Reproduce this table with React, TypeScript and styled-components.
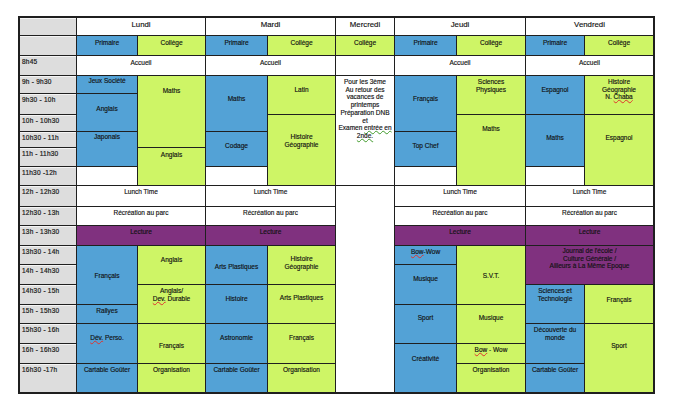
import React from 'react';
import styled, { createGlobalStyle } from 'styled-components';

const Global = createGlobalStyle`
  html, body { margin: 0; padding: 0; background: #ffffff; }
  body { font-family: "Liberation Sans", Arial, Helvetica, sans-serif; }
`;

const Page = styled.div`
  padding: 16px 0 0 18px;
`;

const Timetable = styled.div`
  display: grid;
  width: max-content;
  grid-template-columns: 56px 60px 67px 61px 67px 58px 61px 68px 58px 68px;
  grid-template-rows: 17px 19px 19px 17px 20px 16px 15px 18px 18px 20px 18px 19px 18px 19px 19px 18px 19px 19px 28px;
  gap: 1px;
  background: #1f1f1f;
  border: 2px solid #1f1f1f;
`;

type Tone = 'white' | 'blue' | 'green' | 'purple' | 'grey';

const tones: Record<Tone, string> = {
  white: '#ffffff',
  blue: '#53a2d6',
  green: '#cef566',
  purple: '#80317f',
  grey: '#dddddd',
};

const Cell = styled.div<{ $c: string; $r: string; $tone: Tone; $pt: number; $big?: boolean }>`
  grid-column: ${(p) => p.$c};
  grid-row: ${(p) => p.$r};
  background: ${(p) => tones[p.$tone]};
  padding: ${(p) => p.$pt}px 1px 0;
  text-align: center;
  font-size: ${(p) => (p.$big ? '7.8px' : '6.5px')};
  line-height: ${(p) => (p.$big ? '9px' : '7.7px')};
  color: #111111;
  -webkit-text-stroke: 0.15px #111111;
  overflow: hidden;
  white-space: nowrap;
`;

const TimeLabel = styled.div<{ $r: number }>`
  grid-column: 1;
  grid-row: ${(p) => p.$r};
  background: ${tones.grey};
  padding: 2px 0 0 2px;
  font-size: 6.5px;
  line-height: 7.7px;
  letter-spacing: 0.25px;
  color: #1a1a1a;
  -webkit-text-stroke: 0.2px #1a1a1a;
  white-space: nowrap;
  box-shadow: inset 0 1px 0 #f4f4f4;
`;

const Flag = styled.span<{ $color: string }>`
  text-decoration-line: underline;
  text-decoration-style: wavy;
  text-decoration-color: ${(p) => p.$color};
  text-decoration-thickness: 1px;
  text-decoration-skip-ink: none;
  text-underline-offset: 0px;
`;

type Entry = { c: string; r: string; tone: Tone; pt?: number; big?: boolean; text?: React.ReactNode };

const red = '#e0322c';
const greenU = '#3f9a2a';

const labels = [
  '',
  '',
  '8h45',
  '9h - 9h30',
  '9h30 - 10h',
  '10h - 10h30',
  '10h30 - 11h',
  '11h - 11h30',
  '11h30 -12h',
  '12h - 12h30',
  '12h30 - 13h',
  '13h - 13h30',
  '13h30 - 14h',
  '14h - 14h30',
  '14h30 - 15h',
  '15h - 15h30',
  '15h30 - 16h',
  '16h - 16h30',
  '16h30 -17h',
];

const groups = ['2 / 4', '4 / 6', '7 / 9', '9 / 11'];

const entries: Entry[] = [
  // day headers
  { c: '2 / 4', r: '1', tone: 'white', pt: 2, big: true, text: 'Lundi' },
  { c: '4 / 6', r: '1', tone: 'white', pt: 2, big: true, text: 'Mardi' },
  { c: '6', r: '1', tone: 'white', pt: 2, big: true, text: 'Mercredi' },
  { c: '7 / 9', r: '1', tone: 'white', pt: 2, big: true, text: 'Jeudi' },
  { c: '9 / 11', r: '1', tone: 'white', pt: 2, big: true, text: 'Vendredi' },
  // levels
  { c: '2', r: '2', tone: 'blue', pt: 3, text: 'Primaire' },
  { c: '3', r: '2', tone: 'green', pt: 3, text: 'Collège' },
  { c: '4', r: '2', tone: 'blue', pt: 3, text: 'Primaire' },
  { c: '5', r: '2', tone: 'green', pt: 3, text: 'Collège' },
  { c: '6', r: '2', tone: 'green', pt: 3, text: 'Collège' },
  { c: '7', r: '2', tone: 'blue', pt: 3, text: 'Primaire' },
  { c: '8', r: '2', tone: 'green', pt: 3, text: 'Collège' },
  { c: '9', r: '2', tone: 'blue', pt: 3, text: 'Primaire' },
  { c: '10', r: '2', tone: 'green', pt: 3, text: 'Collège' },
  // accueil
  ...groups.map((c) => ({ c, r: '3', tone: 'white' as Tone, pt: 3, text: 'Accueil' })),
  { c: '6', r: '3', tone: 'white' },
  // lundi morning
  { c: '2', r: '4', tone: 'blue', pt: 1, text: 'Jeux Société' },
  { c: '2', r: '5 / 7', tone: 'blue', pt: 11, text: 'Anglais' },
  { c: '2', r: '7 / 9', tone: 'blue', pt: 1, text: 'Japonais' },
  { c: '2', r: '9', tone: 'white' },
  { c: '3', r: '4 / 8', tone: 'green', pt: 11, text: 'Maths' },
  { c: '3', r: '8 / 10', tone: 'green', pt: 3, text: 'Anglais' },
  // mardi morning
  { c: '4', r: '4 / 7', tone: 'blue', pt: 19, text: 'Maths' },
  { c: '4', r: '7 / 9', tone: 'blue', pt: 10, text: 'Codage' },
  { c: '4', r: '9', tone: 'white' },
  { c: '5', r: '4 / 6', tone: 'green', pt: 10, text: 'Latin' },
  { c: '5', r: '6 / 10', tone: 'green', pt: 18, text: <>Histoire<br />Géographie</> },
  // mercredi
  {
    c: '6',
    r: '4 / 10',
    tone: 'white',
    pt: 2,
    text: (
      <>
        Pour les 3ème
        <br />
        Au retour des
        <br />
        vacances de
        <br />
        printemps
        <br />
        Préparation DNB
        <br />
        et
        <br />
        Examen <Flag $color={greenU}>entrée en</Flag>
        <br />
        <Flag $color={greenU}>2nde.</Flag>
      </>
    ),
  },
  { c: '6', r: '10 / 20', tone: 'white' },
  // jeudi morning
  { c: '7', r: '4 / 7', tone: 'blue', pt: 19, text: 'Français' },
  { c: '7', r: '7 / 9', tone: 'blue', pt: 10, text: 'Top Chef' },
  { c: '7', r: '9', tone: 'white' },
  { c: '8', r: '4 / 6', tone: 'green', pt: 2, text: <>Sciences<br />Physiques</> },
  { c: '8', r: '6 / 10', tone: 'green', pt: 10, text: 'Maths' },
  // vendredi morning
  { c: '9', r: '4 / 6', tone: 'blue', pt: 10, text: 'Espagnol' },
  { c: '9', r: '6 / 9', tone: 'blue', pt: 19, text: 'Maths' },
  { c: '9', r: '9', tone: 'white' },
  {
    c: '10',
    r: '4 / 6',
    tone: 'green',
    pt: 2,
    text: (
      <>
        Histoire
        <br />
        Géographie
        <br />
        N. <Flag $color={red}>Chaba</Flag>
      </>
    ),
  },
  { c: '10', r: '6 / 10', tone: 'green', pt: 19, text: 'Espagnol' },
  // midday
  ...groups.map((c) => ({ c, r: '10', tone: 'white' as Tone, pt: 2, text: 'Lunch Time' })),
  ...groups.map((c) => ({ c, r: '11', tone: 'white' as Tone, pt: 2, text: 'Récréation au parc' })),
  ...groups.map((c) => ({ c, r: '12', tone: 'purple' as Tone, pt: 2, text: 'Lecture' })),
  // lundi afternoon
  { c: '2', r: '13 / 16', tone: 'blue', pt: 26, text: 'Français' },
  { c: '2', r: '16', tone: 'blue', pt: 2, text: 'Rallyes' },
  { c: '2', r: '17 / 19', tone: 'blue', pt: 10, text: <><Flag $color={red}>Dév.</Flag> Perso.</> },
  { c: '2', r: '19', tone: 'blue', pt: 2, text: 'Cartable Goûter' },
  { c: '3', r: '13 / 15', tone: 'green', pt: 10, text: 'Anglais' },
  { c: '3', r: '15 / 17', tone: 'green', pt: 2, text: <>Anglais/<br /><Flag $color={red}>Dev.</Flag> Durable</> },
  { c: '3', r: '17 / 19', tone: 'green', pt: 18, text: 'Français' },
  { c: '3', r: '19', tone: 'green', pt: 2, text: 'Organisation' },
  // mardi afternoon
  { c: '4', r: '13 / 15', tone: 'blue', pt: 17, text: 'Arts Plastiques' },
  { c: '4', r: '15 / 17', tone: 'blue', pt: 10, text: 'Histoire' },
  { c: '4', r: '17 / 19', tone: 'blue', pt: 10, text: 'Astronomie' },
  { c: '4', r: '19', tone: 'blue', pt: 2, text: 'Cartable Goûter' },
  { c: '5', r: '13 / 15', tone: 'green', pt: 9, text: <>Histoire<br />Géographie</> },
  { c: '5', r: '15 / 17', tone: 'green', pt: 9, text: 'Arts Plastiques' },
  { c: '5', r: '17 / 19', tone: 'green', pt: 10, text: 'Français' },
  { c: '5', r: '19', tone: 'green', pt: 2, text: 'Organisation' },
  // jeudi afternoon
  { c: '7', r: '13', tone: 'blue', pt: 2, text: <><Flag $color={red}>Bow</Flag>-Wow</> },
  { c: '7', r: '14 / 16', tone: 'blue', pt: 10, text: 'Musique' },
  { c: '7', r: '16 / 18', tone: 'blue', pt: 9, text: 'Sport' },
  { c: '7', r: '18 / 20', tone: 'blue', pt: 11, text: 'Créativité' },
  { c: '8', r: '13 / 16', tone: 'green', pt: 26, text: 'S.V.T.' },
  { c: '8', r: '16 / 18', tone: 'green', pt: 9, text: 'Musique' },
  { c: '8', r: '18', tone: 'green', pt: 2, text: <><Flag $color={red}>Bow</Flag> - Wow</> },
  { c: '8', r: '19', tone: 'green', pt: 2, text: 'Organisation' },
  // vendredi afternoon
  {
    c: '9 / 11',
    r: '13 / 15',
    tone: 'purple',
    pt: 1,
    text: (
      <>
        Journal de l'école /
        <br />
        Culture Générale /
        <br />
        Ailleurs à La Même Epoque
      </>
    ),
  },
  { c: '9', r: '15 / 17', tone: 'blue', pt: 2, text: <>Sciences et<br />Technologie</> },
  { c: '9', r: '17 / 19', tone: 'blue', pt: 2, text: <>Découverte du<br />monde</> },
  { c: '9', r: '19', tone: 'blue', pt: 2, text: 'Cartable Goûter' },
  { c: '10', r: '15 / 17', tone: 'green', pt: 11, text: 'Français' },
  { c: '10', r: '17 / 20', tone: 'green', pt: 18, text: 'Sport' },
];

export default function App() {
  return (
    <Page>
      <Global />
      <Timetable>
        {labels.map((l, i) => (
          <TimeLabel key={`l${i}`} $r={i + 1}>
            {l}
          </TimeLabel>
        ))}
        {entries.map((e, i) => (
          <Cell key={i} $c={e.c} $r={e.r} $tone={e.tone} $pt={e.pt ?? 2} $big={e.big}>
            {e.text}
          </Cell>
        ))}
      </Timetable>
    </Page>
  );
}
